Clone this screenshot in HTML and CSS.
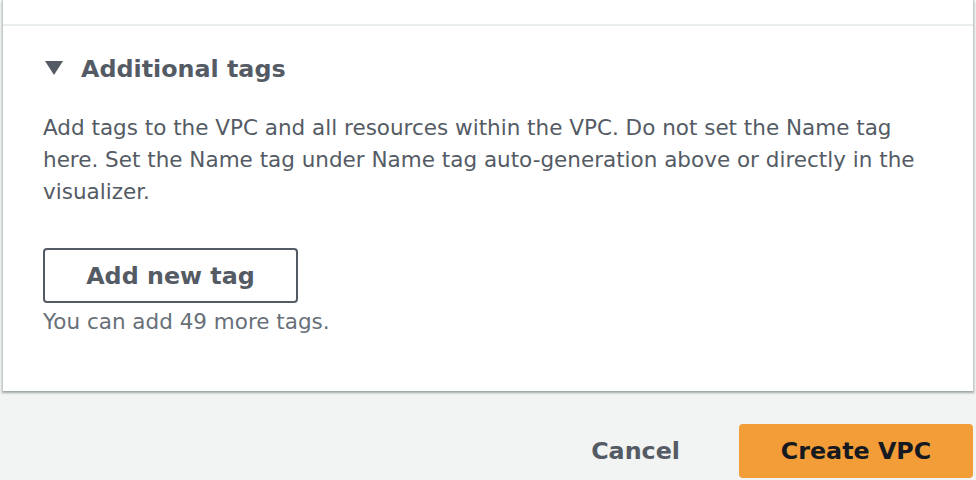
FILE: index.html
```html
<!DOCTYPE html>
<html>
<head>
<meta charset="utf-8">
<link rel="stylesheet" href="styles.css">
</head>
<body>
<div class="panel">
  <div class="prev"></div>
  <div class="divider"></div>
  <section class="section">
    <h2 class="heading">
      <svg class="caret" width="18" height="14" viewBox="0 0 18 14"><path d="M0 0H18L9 14Z" fill="#545b64"/></svg>
      <span>Additional tags</span>
    </h2>
    <p class="desc">Add tags to the VPC and all resources within the VPC. Do not set the Name tag here. Set the Name tag under Name tag auto-generation above or directly in the visualizer.</p>
    <button class="btn-outline">Add new tag</button>
    <p class="hint">You can add 49 more tags.</p>
  </section>
</div>
<div class="actions">
  <button class="btn-link">Cancel</button>
  <button class="btn-primary">Create VPC</button>
</div>
</body>
</html>
```
FILE: styles.css
```css
html, body {
  margin: 0;
  padding: 0;
  background: #f2f3f3;
  font-family: "DejaVu Sans", "Noto Sans", sans-serif;
  color: #545b64;
  overflow: hidden;
  height: 480px;
}
.panel {
  margin: 0 2px 0 2px;
  background: #fff;
  border-left: 1px solid #c6cbcb;
  border-right: 1px solid #c6cbcb;
  box-shadow: 0 2px 2px rgba(0, 28, 36, 0.35);
  height: 391px;
  box-sizing: border-box;
}
.prev {
  height: 24px;
}
.divider {
  height: 2px;
  background: #eaeded;
}
.section {
  padding: 0 40px 0 40px;
}
.heading {
  margin: 0;
  padding-top: 27px;
  display: flex;
  align-items: center;
  gap: 18px;
  font-size: 23.8px;
  font-weight: 700;
  color: #545b64;
  line-height: 32px;
}
.caret {
  margin-left: 2px;
  margin-top: -2px;
}
.desc {
  margin: 27px 0 0 0;
  font-size: 21.5px;
  line-height: 32px;
  color: #545b64;
}
.btn-outline {
  display: block;
  margin: 40px 0 0 0;
  width: 255px;
  height: 55px;
  border: 2px solid #545b64;
  border-radius: 4px;
  background: #fff;
  font-family: inherit;
  font-size: 23.8px;
  font-weight: 700;
  color: #545b64;
  padding: 0;
}
.hint {
  margin: 3px 0 0 0;
  font-size: 21.5px;
  line-height: 32px;
  color: #687078;
}
.actions {
  display: flex;
  justify-content: flex-end;
  align-items: center;
  padding: 33px 3px 0 0;
  gap: 59px;
}
.btn-link {
  background: none;
  border: none;
  padding: 0;
  font-family: inherit;
  font-size: 23.8px;
  font-weight: 700;
  color: #545b64;
  line-height: 32px;
}
.btn-primary {
  width: 234px;
  height: 54px;
  background: #f29d38;
  border: none;
  border-radius: 4px;
  font-family: inherit;
  font-size: 23.8px;
  font-weight: 700;
  color: #16191f;
  padding: 0;
}
```
